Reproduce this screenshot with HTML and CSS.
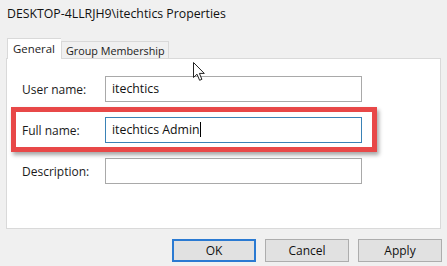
FILE: index.html
```html
<!DOCTYPE html>
<html>
<head>
<meta charset="utf-8">
<link rel="stylesheet" href="styles.css">
</head>
<body>
<div class="window">
  <div class="titlebar">DESKTOP-4LLRJH9\itechtics Properties</div>
  <div class="tabs">
    <div class="tab active">General</div>
    <div class="tab">Group Membership</div>
  </div>
  <div class="panel">
    <div class="row">
      <span class="label">User name:</span>
      <div class="field">itechtics</div>
    </div>
    <div class="row">
      <span class="label">Full name:</span>
      <div class="field focused">itechtics Admin<span class="caret"></span></div>
    </div>
    <div class="row">
      <span class="label">Description:</span>
      <div class="field"></div>
    </div>
    <div class="highlight"></div>
  </div>
  <div class="buttons">
    <div class="btn default">OK</div>
    <div class="btn">Cancel</div>
    <div class="btn">Apply</div>
  </div>
  <svg class="cursor" width="13" height="20" viewBox="0 0 13 20">
    <path d="M0.5 0.5 L0.5 15.5 L4 12.2 L6.6 18.3 L8.9 17.3 L6.4 11.4 L11.3 11.4 Z" fill="#fff" stroke="#222" stroke-width="1" stroke-linejoin="round"/>
  </svg>
</div>
</body>
</html>
```
FILE: styles.css
```css
html, body {
  margin: 0;
  padding: 0;
}
body {
  background: #f0f0f0;
  font-family: "Open Sans", "Noto Sans", sans-serif;
  color: #1a1a1a;
  width: 447px;
  height: 266px;
  overflow: hidden;
}
.window {
  position: relative;
  width: 447px;
  height: 266px;
}
.titlebar {
  height: 30px;
  padding-left: 7px;
  font-size: 12.3px;
  line-height: 28px;
  color: #111;
}
.tabs {
  display: flex;
  align-items: flex-end;
  height: 28px;
  padding-left: 7px;
}
.tab {
  font-size: 10.8px;
  height: 16px;
  line-height: 17px;
  padding: 0 3px 0 4px;
  border: 1px solid #d9d9d9;
  border-bottom: none;
  background: #f0f0f0;
  color: #222;
}
.tab.active {
  font-size: 11.4px;
  height: 20px;
  line-height: 19px;
  background: #fff;
  border-right: none;
  position: relative;
  z-index: 2;
  margin-bottom: -1px;
  padding: 0 6px 0 5px;
}
.panel {
  position: relative;
  margin-left: 6px;
  width: 433px;
  height: 152px;
  background: #fff;
  border: 1px solid #d9d9d9;
  padding-top: 17px;
  box-sizing: content-box;
}
.row {
  display: flex;
  align-items: center;
  height: 26px;
  margin-bottom: 15px;
}
.label {
  width: 83px;
  padding-left: 15px;
  font-size: 12px;
  color: #1a1a1a;
}
.field {
  box-sizing: border-box;
  width: 257px;
  height: 26px;
  border: 1px solid #a9a9a9;
  background: #fff;
  font-size: 12.3px;
  line-height: 23px;
  padding-left: 6px;
  color: #111;
}
.field.focused {
  border-color: #3a82b6;
}
.caret {
  display: inline-block;
  width: 1px;
  height: 15px;
  background: #000;
  vertical-align: -3px;
}
.highlight {
  position: absolute;
  left: 4px;
  top: 48px;
  width: 356px;
  height: 35px;
  border: 5px solid #e84848;
  box-shadow: 2px 3px 4px rgba(0, 0, 0, 0.35);
  pointer-events: none;
}
.buttons {
  display: flex;
  justify-content: flex-end;
  gap: 9px;
  padding-right: 5px;
  margin-top: 10px;
}
.btn {
  box-sizing: border-box;
  width: 84px;
  height: 23px;
  border: 1px solid #adadad;
  background: #e1e1e1;
  font-size: 12px;
  text-align: center;
  line-height: 21px;
  color: #111;
}
.btn.default {
  border: 2px solid #2a7ad2;
  line-height: 19px;
}
.cursor {
  position: absolute;
  left: 193px;
  top: 62px;
}
```
